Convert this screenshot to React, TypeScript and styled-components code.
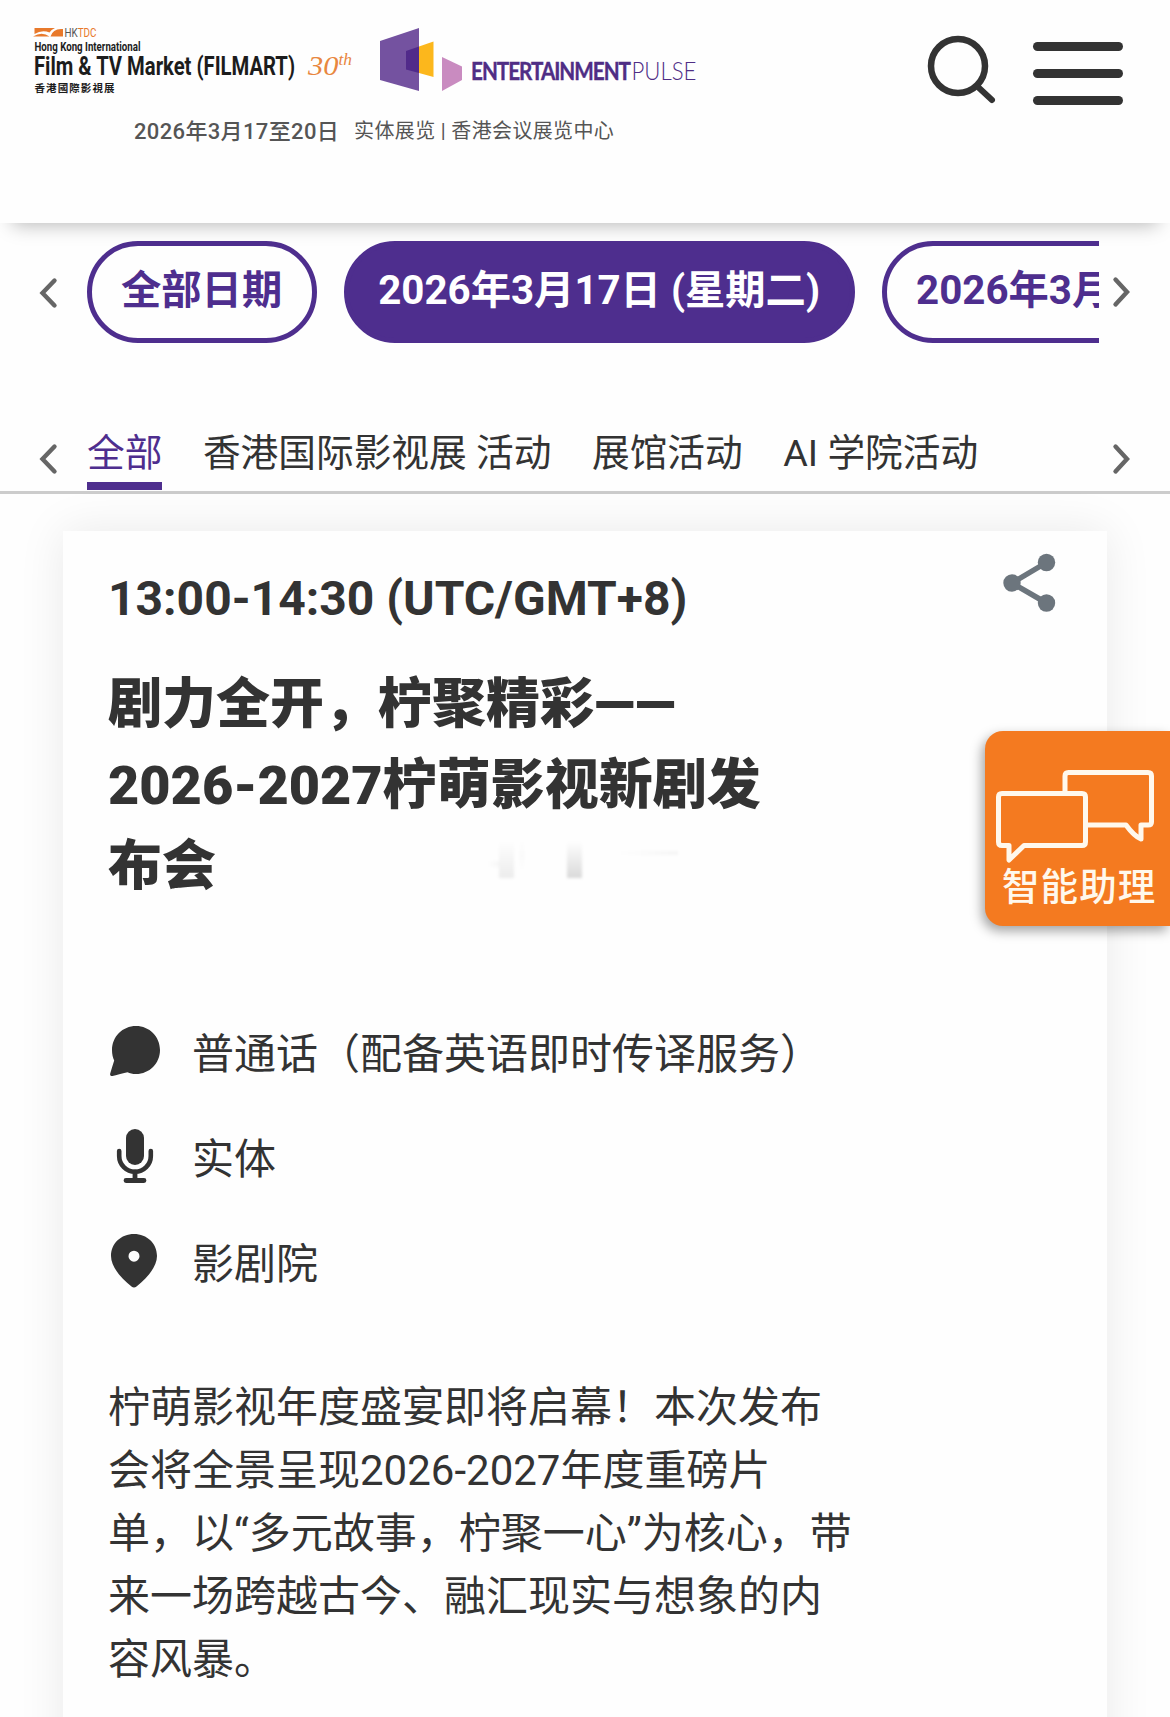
import React from "react";
import styled, { createGlobalStyle, css } from "styled-components";

const PURPLE = "#4e2e8e";
const INK = "#333";
const SANS = `Roboto, "Noto Sans CJK SC", sans-serif`;

const GlobalStyle = createGlobalStyle`
  *, *::before, *::after { box-sizing: border-box; }
  html, body { margin: 0; padding: 0; background: #fefefe; }
  body { font-family: ${SANS}; color: ${INK}; }
  button { font: inherit; color: inherit; border: 0; padding: 0; background: none; cursor: pointer; }
`;

const Page = styled.div`
  position: relative;
  width: 1170px;
  height: 1717px;
  overflow: hidden;
  background: #fefefe;
`;

const Header = styled.header`
  display: flex;
  justify-content: space-between;
  height: 223px;
  padding: 20px 47px 0 30px;
  background: #fefefe;
  box-shadow: 0 14px 18px -12px rgba(0, 0, 0, 0.28);
`;

const Brand = styled.div`
  display: flex;
  flex-direction: column;
`;

const Logo = styled.svg`
  display: block;
  width: 680px;
  height: 80px;
`;

const EventLine = styled.div`
  display: flex;
  align-items: center;
  height: 32px;
  margin-top: 13px;
  padding-left: 104px;
  color: #555;
  white-space: pre;
`;

const EventDate = styled.span`
  font-size: 22px;
  font-weight: 500;
  letter-spacing: 0.35px;
`;

const EventVenue = styled.span`
  margin-left: 15px;
  padding-top: 1px;
  font-size: 20px;
  letter-spacing: 0.35px;
`;

const HeaderActions = styled.div`
  display: flex;
  align-items: flex-start;
  gap: 36px;
  padding-top: 14px;
`;

const SearchIcon = styled.svg`
  display: block;
  width: 70px;
  height: 70px;
`;

const Burger = styled.button`
  display: flex;
  flex-direction: column;
  gap: 18px;
  margin-top: 8px;
`;

const BurgerBar = styled.span`
  width: 90px;
  height: 9px;
  border-radius: 5px;
  background: ${INK};
`;

const Scroller = styled.div<{ $kind: "dates" | "tabs" }>`
  display: flex;
  padding: 0 39px 0 36px;
  ${(p) =>
    p.$kind === "dates"
      ? css`
          margin-top: 18px;
          height: 102px;
        `
      : css`
          margin-top: 86px;
          height: 65px;
          border-bottom: 3px solid #ccc;
        `}
`;

const Arrow = styled.button<{ $side: "left" | "right"; $top: number }>`
  flex: none;
  display: flex;
  align-items: flex-start;
  justify-content: ${(p) => (p.$side === "left" ? "flex-start" : "flex-end")};
  width: ${(p) => (p.$side === "left" ? 51 : 32.5)}px;
  padding-top: ${(p) => p.$top}px;
`;

const Track = styled.div<{ $gap: number }>`
  flex: 1;
  min-width: 0;
  display: flex;
  gap: ${(p) => p.$gap}px;
  overflow: hidden;
`;

const DatePill = styled.button<{ $active?: boolean }>`
  flex: none;
  height: 102px;
  padding: 0 30px 2px 29px;
  border: 5px solid ${PURPLE};
  border-radius: 51px;
  background: ${(p) => (p.$active ? PURPLE : "#fefefe")};
  color: ${(p) => (p.$active ? "#fff" : PURPLE)};
  font-size: 40.3px;
  font-weight: 700;
  line-height: 60px;
  white-space: nowrap;
`;

const Tab = styled.button<{ $active?: boolean }>`
  flex: none;
  height: 61px;
  padding-bottom: 5px;
  border-bottom: 8px solid ${(p) => (p.$active ? PURPLE : "transparent")};
  color: ${(p) => (p.$active ? PURPLE : INK)};
  font-size: 37.7px;
  line-height: 46px;
  white-space: nowrap;
`;

const Card = styled.article`
  width: 1044px;
  min-height: 1300px;
  margin: 37px 0 0 63px;
  padding: 0 46px 0 45px;
  background: #fefefe;
  box-shadow: 0 0 44px rgba(0, 0, 0, 0.085);
`;

const CardTop = styled.div`
  display: flex;
  justify-content: space-between;
  height: 133px;
`;

const Time = styled.div`
  padding-top: 38px;
  font-size: 48px;
  font-weight: 700;
  line-height: 60px;
  white-space: nowrap;
`;

const ShareButton = styled.button`
  align-self: flex-start;
  margin: 22px 4px 0 0;
`;

const Title = styled.h2`
  position: relative;
  margin: 0;
  font-size: 54px;
  font-weight: 900;
  line-height: 81px;
  white-space: nowrap;
`;

const Smudge = styled.span`
  position: absolute;
  left: 380px;
  top: 177px;
  width: 192px;
  height: 37px;
  background:
    linear-gradient(transparent, rgba(0, 0, 0, 0.07)) 11px 0 / 15px 37px no-repeat,
    linear-gradient(transparent, rgba(0, 0, 0, 0.14)) 79px 0 / 15px 37px no-repeat,
    linear-gradient(90deg, transparent, rgba(0, 0, 0, 0.035)) 130px 10px / 60px 4px no-repeat,
    linear-gradient(transparent, rgba(0, 0, 0, 0.02), transparent) 32px 0 / 4px 30px no-repeat,
    linear-gradient(90deg, transparent, rgba(0, 0, 0, 0.03)) 0 20px / 11px 6px no-repeat;
  filter: blur(1.5px);
`;

const Facts = styled.ul`
  display: flex;
  flex-direction: column;
  gap: 45px;
  margin: 115px 0 0 1px;
  padding: 0;
  list-style: none;
`;

const Fact = styled.li`
  display: flex;
  align-items: center;
  gap: 31px;
  height: 60px;
  font-size: 42px;
  line-height: 60px;
  white-space: nowrap;
`;

const FactIcon = styled.svg`
  flex: none;
  width: 52px;
  height: 60px;
`;

const FactText = styled.span`
  padding-top: 5px;
`;

const Description = styled.p`
  margin: 84px 0 0;
  font-size: 42px;
  line-height: 63px;
  white-space: nowrap;
`;

const Assistant = styled.button`
  position: absolute;
  right: 0;
  top: 731px;
  display: flex;
  flex-direction: column;
  align-items: flex-start;
  width: 185px;
  height: 195px;
  padding: 32px 0 0 8px;
  border-radius: 18px 0 0 18px;
  background: #f47a20;
  box-shadow: -3px 5px 12px rgba(0, 0, 0, 0.36);
`;

const AssistantLabel = styled.span`
  padding-left: 9px;
  color: #fff8ec;
  font-size: 37.5px;
  font-weight: 500;
  letter-spacing: 1.1px;
  line-height: 44px;
  white-space: nowrap;
`;

function SiteLogo() {
  const fit = "spacingAndGlyphs";
  return (
    <Logo viewBox="30 20 680 80">
      <path d="M34.500 28H55Q51 29.500 49.500 32.500Q42 29.500 34.500 34Z" fill="#e8792b" />
      <path d="M33 36.500Q42 31 49.500 36.500Z M50.500 36.500Q53 28 63 29V36.500Z" fill="#e8792b" />
      <g fontFamily="Roboto, sans-serif">
        <text x="64.500" y="36.800" fontSize="12" textLength="32" lengthAdjust={fit} fill="#e8792b">
          <tspan fill="#555">HK</tspan>TDC
        </text>
        <text x="34.500" y="51" fontSize="12" fontWeight="700" textLength="106" lengthAdjust={fit} fill="#1c1c1c">Hong Kong International</text>
        <text x="34" y="74.500" fontSize="25" fontWeight="700" textLength="261" lengthAdjust={fit} fill="#1c1c1c">Film &amp; TV Market (FILMART)</text>
      </g>
      <text x="34.500" y="92" fontSize="10.500" fontWeight="700" fontFamily="'Noto Sans CJK TC', sans-serif" textLength="80" fill="#1c1c1c">香港國際影視展</text>
      <text x="308" y="75" fontSize="28" fontFamily="'Liberation Serif', serif" fontStyle="italic" fill="#e8873f" textLength="44" lengthAdjust={fit}>
        30<tspan dy="-10" fontSize="16">th</tspan>
      </text>
      <path d="M380 41L419 28V91L380 80Z" fill="#7452a0" />
      <path d="M419 46.500L433.500 41.500V77L419 73Z" fill="#fcb71c" />
      <path d="M406 51L419 46.500V73L406 69.500Z" fill="#512a8a" />
      <path d="M442 57L462 66.500V80L442 91Z" fill="#c98bc0" />
      <g fontFamily="Lato, sans-serif" fontSize="25" fill="#4f2d85">
        <text x="471" y="80" fontWeight="700" letterSpacing="-1.2" textLength="159" lengthAdjust={fit} stroke="#4f2d85" strokeWidth="0.4">ENTERTAINMENT</text>
        <text x="631.500" y="80" fontWeight="300" textLength="65" lengthAdjust={fit}>PULSE</text>
      </g>
    </Logo>
  );
}

function Chevron({ side }: { side: "left" | "right" }) {
  return (
    <svg width="25" height="34" viewBox="0 0 25 34" fill="none" stroke="#666" strokeWidth="4.400" strokeLinecap="round">
      <path d={side === "left" ? "M18.500 4.500L6.500 17L18.500 29.500" : "M9.500 4.500L21 17L9.500 29.500"} />
    </svg>
  );
}

function BubbleIcon() {
  return (
    <FactIcon viewBox="0 0 52 60" fill={INK}>
      <path d="M27 4C40.500 4 51 14.700 51 28S40.500 52 27 52C23.500 52 20.800 51.200 18.500 50.200C12.500 51.500 7.500 53 3.500 54C1.800 54.400 .7 53.200 1.200 51.500C2.500 47 3.800 43 5.200 38.500C3.800 35.500 3 32 3 28C3 14.700 13.500 4 27 4Z" />
    </FactIcon>
  );
}

function MicIcon() {
  return (
    <FactIcon viewBox="0 0 52 60" fill="none">
      <rect x="17" y="2" width="18" height="36" rx="9" fill={INK} />
      <path d="M10.200 24V29A15.800 15.800 0 0 0 41.800 29V24" stroke={INK} strokeWidth="4.600" strokeLinecap="round" />
      <path d="M26 45V53M17 53.500H35" stroke={INK} strokeWidth="4.800" strokeLinecap="round" />
    </FactIcon>
  );
}

function PinIcon() {
  return (
    <FactIcon viewBox="0 0 52 60" fill={INK} fillRule="evenodd">
      <path d="M25 2C38 2 48 11.500 48 24C48 35 38 46 27.500 54.500Q25 56.500 22.500 54.500C12 46 2 35 2 24C2 11.500 12 2 25 2ZM25 18.700A5.500 5.500 0 1 0 25 29.700A5.500 5.500 0 1 0 25 18.700Z" />
    </FactIcon>
  );
}

const dates = ["全部日期", "2026年3月17日 (星期二)", "2026年3月18日 (星期三)"];
const tabs = ["全部", "香港国际影视展 活动", "展馆活动", "AI 学院活动"];
const facts = [
  { icon: <BubbleIcon />, text: "普通话（配备英语即时传译服务）" },
  { icon: <MicIcon />, text: "实体" },
  { icon: <PinIcon />, text: "影剧院" },
];

export default function App() {
  return (
    <Page lang="zh-CN">
      <GlobalStyle />
      <Header>
        <Brand>
          <SiteLogo />
          <EventLine>
            <EventDate>2026年3月17至20日</EventDate>
            <EventVenue>实体展览 | 香港会议展览中心</EventVenue>
          </EventLine>
        </Brand>
        <HeaderActions>
          <SearchIcon viewBox="0 0 70 70" fill="none" stroke={INK} strokeLinecap="round">
            <circle cx="31" cy="32" r="27" strokeWidth="6.500" />
            <path d="M51 53L65 66" strokeWidth="6" />
          </SearchIcon>
          <Burger aria-label="菜单">
            <BurgerBar />
            <BurgerBar />
            <BurgerBar />
          </Burger>
        </HeaderActions>
      </Header>

      <Scroller $kind="dates">
        <Arrow $side="left" $top={34.5}><Chevron side="left" /></Arrow>
        <Track $gap={27}>
          {dates.map((d, i) => (
            <DatePill key={d} $active={i === 1}>{d}</DatePill>
          ))}
        </Track>
        <Arrow $side="right" $top={33.5}><Chevron side="right" /></Arrow>
      </Scroller>

      <Scroller $kind="tabs">
        <Arrow $side="left" $top={12.5}><Chevron side="left" /></Arrow>
        <Track $gap={40.5}>
          {tabs.map((t, i) => (
            <Tab key={t} $active={i === 0}>{t}</Tab>
          ))}
        </Track>
        <Arrow $side="right" $top={12.5}><Chevron side="right" /></Arrow>
      </Scroller>

      <Card>
        <CardTop>
          <Time>13:00-14:30 (UTC/GMT+8)</Time>
          <ShareButton aria-label="分享">
            <svg width="56" height="62" viewBox="0 0 56 62" fill="#6c757d" stroke="#6c757d">
              <path d="M45.500 9.500L11 30L45.500 50" fill="none" strokeWidth="5.500" />
              <g stroke="none">
                <circle cx="45.500" cy="9.500" r="8.700" />
                <circle cx="11" cy="30" r="8.700" />
                <circle cx="45.500" cy="50" r="8.700" />
              </g>
            </svg>
          </ShareButton>
        </CardTop>
        <Title>
          剧力全开，柠聚精彩——<br />
          2026-2027柠萌影视新剧发<br />
          布会
          <Smudge />
        </Title>
        <Facts>
          {facts.map((f) => (
            <Fact key={f.text}>
              {f.icon}
              <FactText>{f.text}</FactText>
            </Fact>
          ))}
        </Facts>
        <Description>
          柠萌影视年度盛宴即将启幕！本次发布<br />
          会将全景呈现2026-2027年度重磅片<br />
          单，以“多元故事，柠聚一心”为核心，带<br />
          来一场跨越古今、融汇现实与想象的内<br />
          容风暴。
        </Description>
      </Card>

      <Assistant>
        <svg width="170" height="102" viewBox="993 763 170 102" fill="none" stroke="#fff8ec" strokeWidth="5" strokeLinejoin="round">
          <path d="M1065 793V776Q1065 772.500 1068.500 772.500H1148Q1151.500 772.500 1151.500 776V822Q1151.500 825 1148 825H1141V839Q1134 836 1126 825H1087" />
          <path d="M1002 793.500H1082Q1085.500 793.500 1085.500 797V842Q1085.500 845.500 1082 845.500H1024L1009 860V845.500H1002Q998.500 845.500 998.500 842V797Q998.500 793.500 1002 793.500Z" />
        </svg>
        <AssistantLabel>智能助理</AssistantLabel>
      </Assistant>
    </Page>
  );
}
